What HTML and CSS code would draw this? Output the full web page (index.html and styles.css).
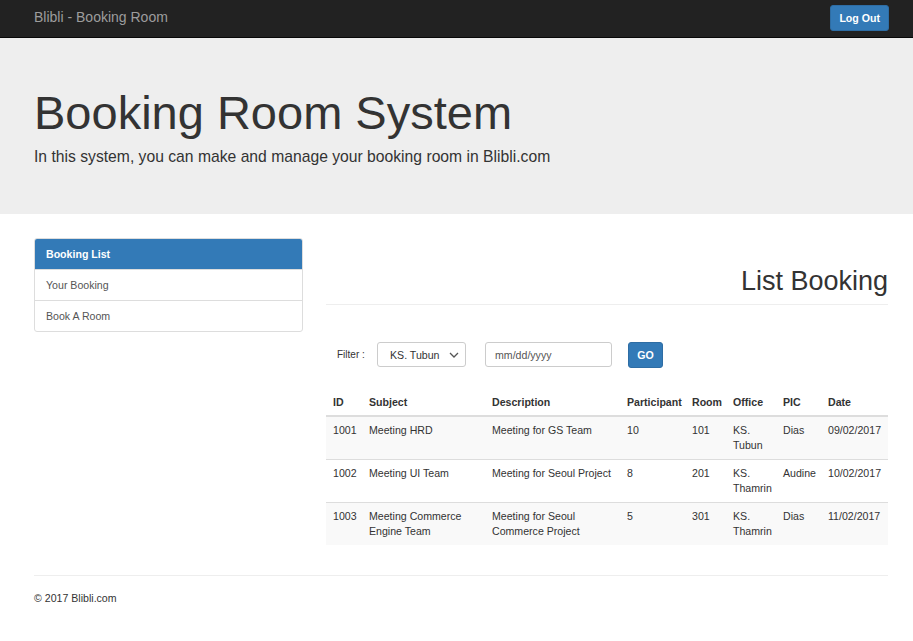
FILE: index.html
```html
<!DOCTYPE html>
<html lang="en">
<head>
<meta charset="utf-8">
<title>Blibli - Booking Room</title>
<link rel="stylesheet" href="styles.css">
</head>
<body>
<nav class="navbar">
  <a class="brand" href="#">Blibli - Booking Room</a>
  <button class="btn btn-primary btn-logout" type="button">Log Out</button>
</nav>

<header class="jumbotron">
  <h1>Booking Room System</h1>
  <p>In this system, you can make and manage your booking room in Blibli.com</p>
</header>

<main class="content">
  <aside class="sidebar">
    <div class="list-group">
      <a class="list-item active" href="#">Booking List</a>
      <a class="list-item" href="#">Your Booking</a>
      <a class="list-item" href="#">Book A Room</a>
    </div>
  </aside>

  <section class="main">
    <h2 class="page-header">List Booking</h2>

    <form class="filter">
      <label class="filter-label">Filter :</label>
      <span class="select-wrap">
        <select class="select">
          <option>KS. Tubun</option>
          <option>KS. Thamrin</option>
        </select>
        <svg class="chevron" width="10" height="6" viewBox="0 0 10 6"><path d="M1 1l4 4 4-4" fill="none" stroke="#555" stroke-width="1.3"/></svg>
      </span>
      <input class="date-input" type="text" placeholder="mm/dd/yyyy">
      <button class="btn btn-primary btn-go" type="button">GO</button>
    </form>

    <table class="table">
      <colgroup>
        <col class="c-id"><col class="c-subject"><col class="c-desc"><col class="c-part">
        <col class="c-room"><col class="c-office"><col class="c-pic"><col class="c-date">
      </colgroup>
      <thead>
        <tr><th>ID</th><th>Subject</th><th>Description</th><th>Participant</th><th>Room</th><th>Office</th><th>PIC</th><th>Date</th></tr>
      </thead>
      <tbody>
        <tr><td>1001</td><td>Meeting HRD</td><td>Meeting for GS Team</td><td>10</td><td>101</td><td>KS. Tubun</td><td>Dias</td><td class="nowrap">09/02/2017</td></tr>
        <tr><td>1002</td><td>Meeting UI Team</td><td>Meeting for Seoul Project</td><td>8</td><td>201</td><td>KS. Thamrin</td><td>Audine</td><td class="nowrap">10/02/2017</td></tr>
        <tr><td>1003</td><td>Meeting Commerce Engine Team</td><td>Meeting for Seoul Commerce Project</td><td>5</td><td>301</td><td>KS. Thamrin</td><td>Dias</td><td class="nowrap">11/02/2017</td></tr>
      </tbody>
    </table>
  </section>
</main>

<footer class="footer">
  <p>&copy; 2017 Blibli.com</p>
</footer>
</body>
</html>
```

FILE: styles.css
```css
* { box-sizing: border-box; }

body {
  margin: 0;
  font-family: "Liberation Sans", Arial, sans-serif;
  font-size: 10.6px;
  line-height: 15px;
  color: #333;
  background: #fff;
}

a { text-decoration: none; color: inherit; }

.navbar {
  height: 38px;
  background: #222;
  border-bottom: 1px solid #080808;
  display: flex;
  align-items: center;
  justify-content: space-between;
  padding: 0 24px 0 34px;
}

.brand {
  font-size: 14px;
  color: #9d9d9d;
  line-height: 20px;
  margin-top: -3px;
}

.btn {
  font-family: inherit;
  font-weight: bold;
  font-size: 10.6px;
  color: #fff;
  border-radius: 3px;
  cursor: pointer;
}

.btn-primary {
  background: #337ab7;
  border: 1px solid #2e6da4;
}

.btn-logout {
  height: 26px;
  padding: 0 8px;
  margin-top: -1px;
}

.jumbotron {
  background: #eee;
  padding: 49px 25px 46px 34px;
}

.jumbotron h1 {
  margin: 0 0 6px;
  font-size: 47px;
  line-height: 52px;
  font-weight: normal;
}

.jumbotron p {
  margin: 0;
  font-size: 15.7px;
  line-height: 23px;
}

.content {
  display: grid;
  grid-template-columns: 269px 1fr;
  gap: 23px;
  padding: 24px 25px 0 34px;
}

.list-group {
  border: 1px solid #ddd;
  border-radius: 3px;
  overflow: hidden;
}

.list-item {
  display: block;
  padding: 8px 11px 7px;
  border-top: 1px solid #ddd;
  color: #555;
}

.list-item:first-child { border-top: 0; }

.list-item.active {
  background: #337ab7;
  color: #fff;
  font-weight: bold;
}

.page-header {
  margin: 28px 0 0;
  padding-bottom: 8px;
  border-bottom: 1px solid #eee;
  font-size: 27px;
  line-height: 30px;
  font-weight: normal;
  text-align: right;
}

.filter {
  margin-top: 37px;
  display: flex;
  align-items: center;
  padding-left: 11px;
  height: 25px;
}

.filter-label {
  font-size: 10px;
  width: 27px;
  white-space: nowrap;
}

.select-wrap {
  position: relative;
  margin-left: 13px;
  display: inline-block;
}

.select {
  appearance: none;
  -webkit-appearance: none;
  width: 89px;
  height: 25px;
  padding: 0 12px;
  font-family: inherit;
  font-size: 10.6px;
  color: #333;
  background: #fff;
  border: 1px solid #ccc;
  border-radius: 3px;
}

.chevron {
  position: absolute;
  right: 7px;
  top: 10px;
  pointer-events: none;
}

.date-input {
  margin-left: 19px;
  width: 127px;
  height: 25px;
  padding: 0 9px;
  font-family: inherit;
  font-size: 10.6px;
  border: 1px solid #ccc;
  border-radius: 3px;
  color: #555;
}

.date-input::placeholder { color: #555; }

.btn-go {
  margin-left: 16px;
  height: 26px;
  width: 35px;
  padding: 0;
}

.table {
  margin-top: 21px;
  width: 100%;
  border-collapse: collapse;
  table-layout: fixed;
}

.c-id { width: 36px; }
.c-subject { width: 123px; }
.c-desc { width: 135px; }
.c-part { width: 65px; }
.c-room { width: 41px; }
.c-office { width: 50px; }
.c-pic { width: 45px; }
.c-date { width: 67px; }

.table th {
  text-align: left;
  font-weight: bold;
  padding: 7px 7px 5px;
  border-bottom: 2px solid #ddd;
  vertical-align: bottom;
}

.table td {
  padding: 6px 7px;
  border-top: 1px solid #ddd;
  vertical-align: top;
}

.table tbody tr:nth-child(odd) { background: #f9f9f9; }

.nowrap { white-space: nowrap; padding-right: 0 !important; }

.footer {
  margin: 30px 25px 0 34px;
  border-top: 1px solid #eee;
  padding-top: 15px;
}

.footer p { margin: 0; }
```
